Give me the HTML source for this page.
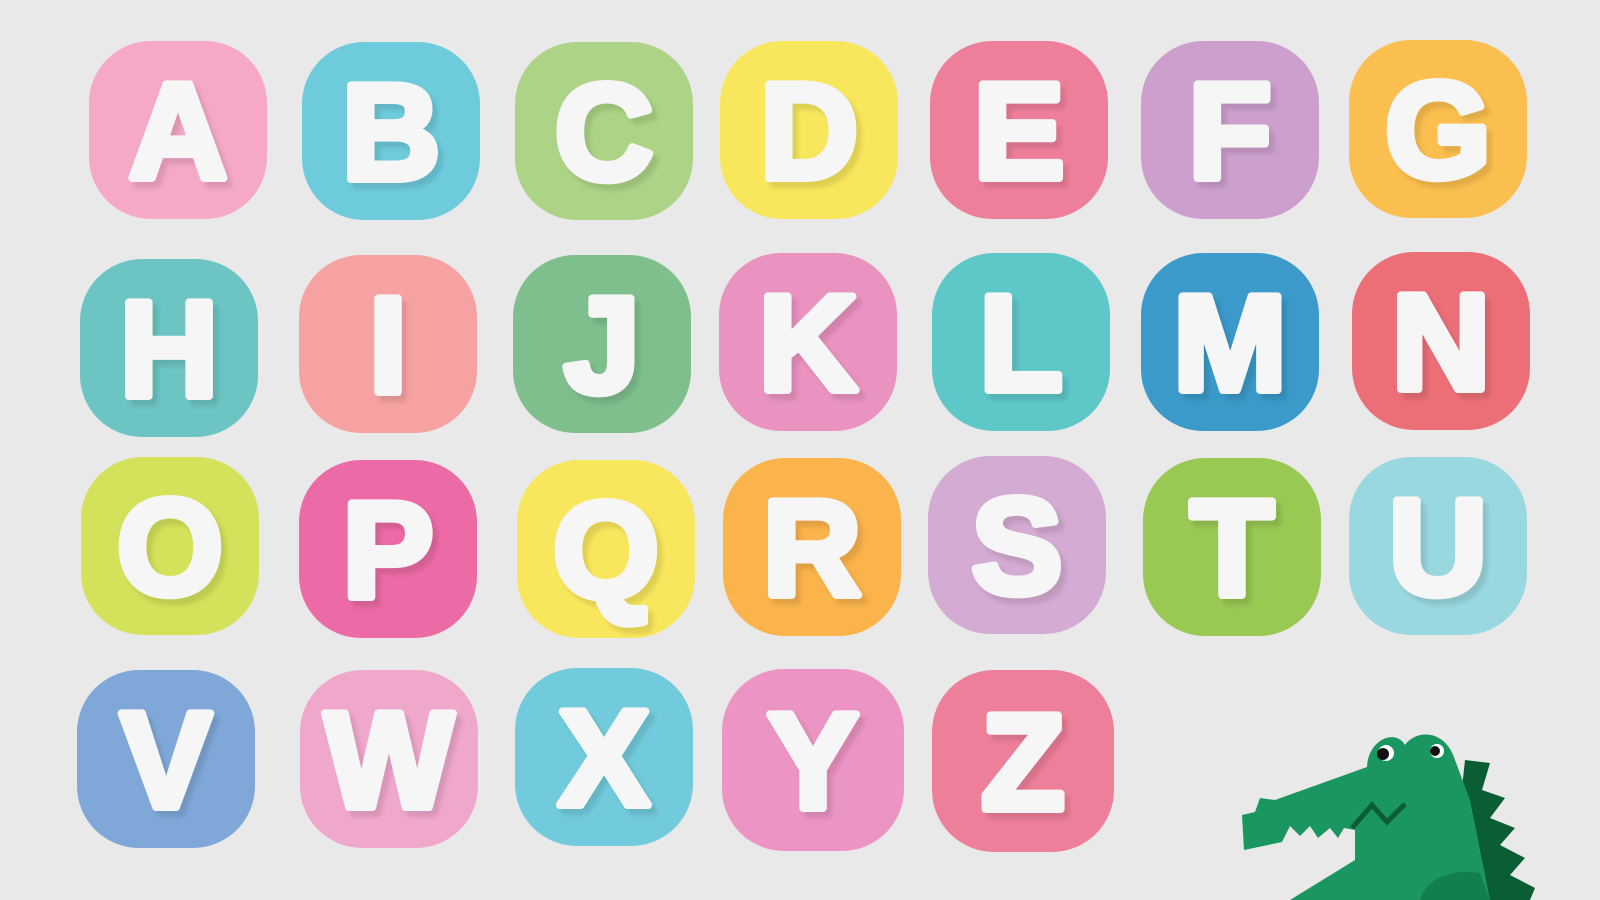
<!DOCTYPE html>
<html><head><meta charset="utf-8"><style>
html,body{margin:0;padding:0;width:1600px;height:900px;overflow:hidden;background:#e9e9e9;}
.t{position:absolute;width:178px;height:178px;border-radius:62px;overflow:hidden;}
.t svg{position:absolute;left:0;top:0;filter:drop-shadow(5px 6px 2px rgba(0,0,0,0.1));}
.t text{font-family:"Liberation Sans",sans-serif;font-weight:bold;font-size:136px;fill:#f6f6f7;stroke:#f6f6f7;stroke-width:8px;stroke-linejoin:round;stroke-linecap:round;paint-order:stroke;}
</style></head><body>
<div class="t" style="left:89px;top:41px;background:#f5a8c8"><svg width="178" height="178"><text x="89" y="137" text-anchor="middle">A</text></svg></div>
<div class="t" style="left:302px;top:42px;background:#6ecbdc"><svg width="178" height="178"><text x="89" y="137" text-anchor="middle">B</text></svg></div>
<div class="t" style="left:515px;top:42px;background:#acd386"><svg width="178" height="178"><text x="89" y="137" text-anchor="middle">C</text></svg></div>
<div class="t" style="left:720px;top:41px;background:#f8e65c"><svg width="178" height="178"><text x="89" y="137" text-anchor="middle">D</text></svg></div>
<div class="t" style="left:930px;top:41px;background:#ee7f9a"><svg width="178" height="178"><text x="89" y="137" text-anchor="middle">E</text></svg></div>
<div class="t" style="left:1141px;top:41px;background:#cd9fcc"><svg width="178" height="178"><text x="89" y="137" text-anchor="middle">F</text></svg></div>
<div class="t" style="left:1349px;top:40px;background:#fbbf4f"><svg width="178" height="178"><text x="89" y="137" text-anchor="middle">G</text></svg></div>

<div class="t" style="left:80px;top:259px;background:#6cc5c3"><svg width="178" height="178"><text x="89" y="137" text-anchor="middle">H</text></svg></div>
<div class="t" style="left:299px;top:255px;background:#f6a2a2"><svg width="178" height="178"><text x="89" y="137" text-anchor="middle">I</text></svg></div>
<div class="t" style="left:513px;top:255px;background:#7fbf8e"><svg width="178" height="178"><text x="89" y="137" text-anchor="middle">J</text></svg></div>
<div class="t" style="left:719px;top:253px;background:#ea92c0"><svg width="178" height="178"><text x="89" y="137" text-anchor="middle">K</text></svg></div>
<div class="t" style="left:932px;top:253px;background:#5ec7c8"><svg width="178" height="178"><text x="89" y="137" text-anchor="middle">L</text></svg></div>
<div class="t" style="left:1141px;top:253px;background:#3b9ac9"><svg width="178" height="178"><text x="89" y="137" text-anchor="middle">M</text></svg></div>
<div class="t" style="left:1352px;top:252px;background:#ec6f78"><svg width="178" height="178"><text x="89" y="137" text-anchor="middle">N</text></svg></div>

<div class="t" style="left:81px;top:457px;background:#d4e15a"><svg width="178" height="178"><text x="89" y="137" text-anchor="middle">O</text></svg></div>
<div class="t" style="left:299px;top:460px;background:#ec6aa5"><svg width="178" height="178"><text x="89" y="137" text-anchor="middle">P</text></svg></div>
<div class="t" style="left:517px;top:460px;background:#f8e65c"><svg width="178" height="178"><text x="89" y="137" text-anchor="middle">Q</text></svg></div>
<div class="t" style="left:723px;top:458px;background:#fbb44b"><svg width="178" height="178"><text x="89" y="137" text-anchor="middle">R</text></svg></div>
<div class="t" style="left:928px;top:456px;background:#d4abd2"><svg width="178" height="178"><text x="89" y="137" text-anchor="middle">S</text></svg></div>
<div class="t" style="left:1143px;top:458px;background:#99c853"><svg width="178" height="178"><text x="89" y="137" text-anchor="middle">T</text></svg></div>
<div class="t" style="left:1349px;top:457px;background:#9ad8e0"><svg width="178" height="178"><text x="89" y="137" text-anchor="middle">U</text></svg></div>

<div class="t" style="left:77px;top:670px;background:#7fa8d8"><svg width="178" height="178"><text x="89" y="137" text-anchor="middle">V</text></svg></div>
<div class="t" style="left:300px;top:670px;background:#f0a7cc"><svg width="178" height="178"><text x="89" y="137" text-anchor="middle">W</text></svg></div>
<div class="t" style="left:515px;top:668px;background:#72cbdc"><svg width="178" height="178"><text x="89" y="137" text-anchor="middle">X</text></svg></div>
<div class="t" style="left:722px;top:669px;width:182px;height:182px;background:#ec94c3"><svg width="182" height="182"><text x="91" y="139" text-anchor="middle">Y</text></svg></div>
<div class="t" style="left:932px;top:670px;width:182px;height:182px;background:#ee7f9a"><svg width="182" height="182"><text x="91" y="139" text-anchor="middle">Z</text></svg></div>

<svg style="position:absolute;left:0;top:0" width="1600" height="900" viewBox="0 0 1600 900">
 <polygon points="1465,760 1490,763 1482,790 1505,798 1490,818 1515,828 1500,845 1525,858 1510,875 1535,888 1530,900 1450,900" fill="#0b5e33"/>
 <path d="M1367,767 C1368,740 1395,728 1405,745 C1415,730 1445,728 1455,760 L1470,800 L1490,900 L1290,900 L1355,860 L1355,830 L1344,828 L1338,838 L1330,828 L1318,838 L1310,826 L1300,836 L1290,826 L1282,842 L1244,850 L1242,815 L1255,812 L1260,798 L1275,800 Z" fill="#1a9660"/>
 <path d="M1420,900 C1425,880 1450,868 1480,873 L1490,900 Z" fill="#137f4e"/>
 <circle cx="1386" cy="753" r="8" fill="#fff"/><circle cx="1383" cy="754" r="6" fill="#111"/>
 <circle cx="1437" cy="751" r="7" fill="#fff"/><circle cx="1435" cy="751" r="5" fill="#111"/>
 <polyline points="1352,828 1372,805 1387,822 1405,804" fill="none" stroke="#0b5e33" stroke-width="5"/>
</svg>
</body></html>
